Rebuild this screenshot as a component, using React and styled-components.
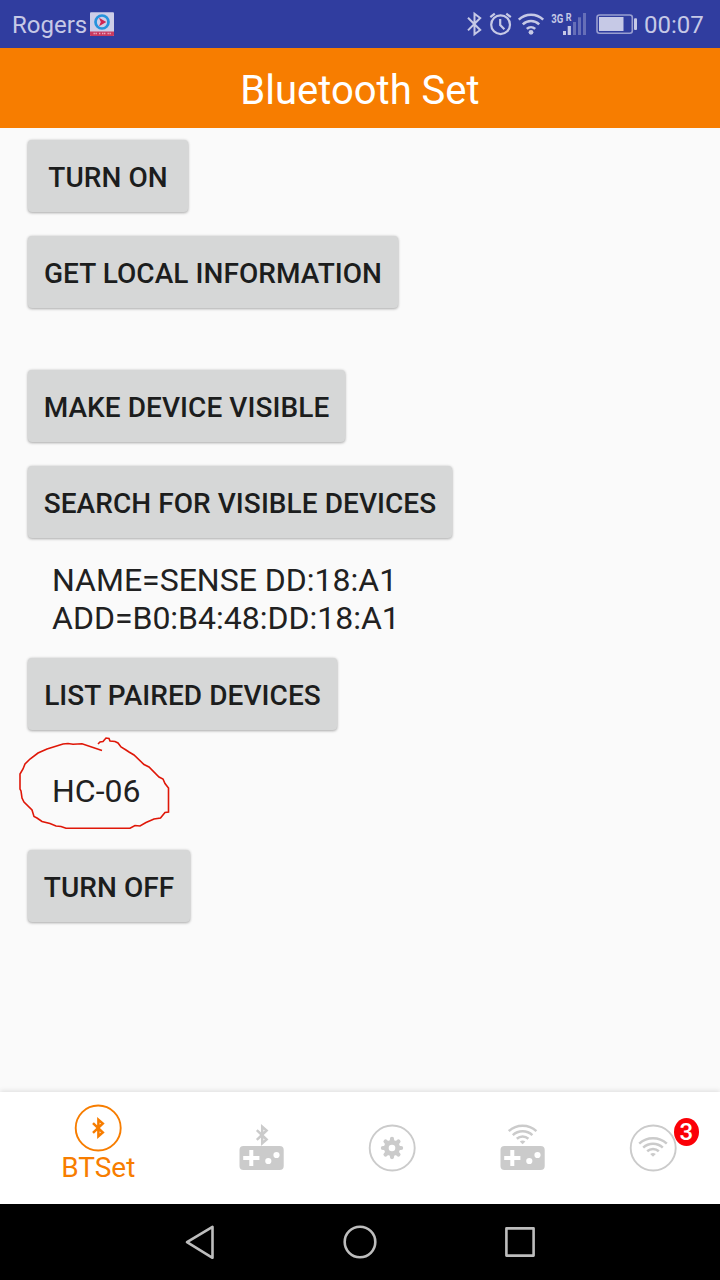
import React from "react";
import styled, { createGlobalStyle } from "styled-components";

const GlobalStyle = createGlobalStyle`
  * { box-sizing: border-box; }
  body { margin: 0; background: #fafafa; font-family: Roboto, sans-serif; }
`;

const Screen = styled.div`
  width: 720px;
  height: 1280px;
  display: flex;
  flex-direction: column;
  background: #fafafa;
  overflow: hidden;
`;

const StatusBar = styled.header`
  height: 48px;
  flex: none;
  display: flex;
  align-items: center;
  padding: 0 16px 0 12px;
  background: #303d9f;
  color: #c6c9e6;
  font-size: 24px;
  line-height: 48px;
`;

const Carrier = styled.span`
  width: 78px;
  padding-top: 2px;
`;

const StatusIcons = styled.div`
  margin-left: auto;
  display: flex;
  height: 48px;
`;

const Clock = styled.span`
  width: 60px;
  margin-left: 4px;
  padding-top: 1px;
  white-space: nowrap;
`;

const TitleBar = styled.div`
  height: 80px;
  flex: none;
  display: flex;
  align-items: center;
  justify-content: center;
  padding-top: 4px;
  background: #f77d00;
  color: #fff;
  font-size: 40px;
`;

const Content = styled.main`
  flex: 1;
  display: flex;
  flex-direction: column;
  align-items: flex-start;
  padding: 12px 28px 0;
`;

const ActionButton = styled.button`
  width: ${(p) => p.$width}px;
  height: 72px;
  flex: none;
  margin: 0 0 24px;
  padding: 2px 0 0;
  border: 0;
  border-radius: 4px;
  background: #d6d7d7;
  box-shadow: 0 1px 3px rgba(0, 0, 0, 0.28), 0 0 3px rgba(0, 0, 0, 0.12);
  color: #1c1d1d;
  font: 500 28px/33px Roboto, sans-serif;
  letter-spacing: 0.06px;
  white-space: nowrap;
`;

const Result = styled.div`
  position: relative;
  height: ${(p) => p.$height}px;
  flex: none;
  padding: ${(p) => p.$top || 0}px 0 0 24px;
  color: #212121;
  font-size: 32px;
  line-height: 38px;
  white-space: pre;
`;

const ResultText = styled.div`
  margin-top: -1px;
`;

const Scribble = styled.svg`
  position: absolute;
  left: -10px;
  top: -20px;
`;

const TabBar = styled.nav`
  height: 112px;
  flex: none;
  display: grid;
  grid-template-columns: 196.5px repeat(4, 130.5px);
  background: #fff;
  box-shadow: 0 -1px 5px rgba(0, 0, 0, 0.12);
`;

const Tab = styled.div`
  display: flex;
  flex-direction: column;
  align-items: center;
  padding-top: ${(p) => (p.$active ? 12 : 32)}px;
  color: ${(p) => (p.$active ? "#f77d00" : "#cbcbcb")};
  font-size: 28px;
  line-height: 32px;
`;

const IconHolder = styled.div`
  position: relative;
  width: 48px;
  height: 48px;
`;

const Badge = styled.span`
  position: absolute;
  left: 44.5px;
  top: -6px;
  width: 25px;
  height: 28px;
  border-radius: 12.5px / 14px;
  background: #fb0007;
  color: #fff;
  font-size: 24px;
  font-weight: 500;
  line-height: 29px;
  text-align: center;
`;

const NavBar = styled.footer`
  height: 76px;
  flex: none;
  display: flex;
  justify-content: center;
  align-items: center;
  gap: 120px;
  background: #000;
`;

const Icon = styled.svg`
  display: block;
  flex: none;
`;

const AppIcon = () => (
  <Icon width="24" height="48" viewBox="0 0 24 48">
    <rect y="12.3" width="24" height="23.7" rx="1" fill="#cdcee8" />
    <path d="M0 31.6h24V35a1 1 0 0 1-1 1H1a1 1 0 0 1-1-1z" fill="#c83a60" />
    <circle cx="12" cy="22" r="6.5" fill="none" stroke="#2593dc" strokeWidth="2.7" />
    <path d="M9 17.8l7.3 4.2L9 26.200l1.800-4.200z" fill="#cf2553" />
    <path d="M3.5 33.5h4M9 33.500h2M12 33.500h4M17.500 33.500h3.500" stroke="#e7a9c0" strokeWidth="1.7" strokeDasharray="1.4 .6" />
  </Icon>
);

const StatusGlyphs = () => (
  <Icon width="180" height="48" viewBox="460 0 180 48" fill="none" stroke="#c6c9e6">
    <path d="M468 17.800L480.200 30 474.500 34.200V13.800L480.200 18 468 30.400" strokeWidth="2" />
    <circle cx="500.6" cy="24.7" r="9.4" strokeWidth="2.2" />
    <path d="M500.200 19v6l4.200 4.200" strokeWidth="2.2" />
    <path d="M490.300 17.200l4.500-3.600M510.800 17.200l-4.500-3.600" strokeWidth="2.2" />
    <path d="M518.800 19.700a17.600 17.600 0 0 1 24.400 0M522.800 24.400a11.800 11.800 0 0 1 16.400 0M526.800 28.800a6.200 6.200 0 0 1 8.400 0" strokeWidth="2.5" />
    <circle cx="531" cy="32.3" r="2.4" fill="#c6c9e6" stroke="none" />
    <g fill="#c6c9e6" stroke="none" fontFamily="Roboto, sans-serif" fontWeight="700">
      <text x="551.3" y="23" fontSize="13.5" textLength="12" lengthAdjust="spacingAndGlyphs">3G</text>
      <text x="565.8" y="20.8" fontSize="10.5" textLength="5.8" lengthAdjust="spacingAndGlyphs">R</text>
      <rect x="563" y="31" width="3" height="4" />
      <rect x="567.7" y="26" width="3.2" height="9" />
      <g opacity=".36">
        <rect x="573" y="22" width="3" height="13" />
        <rect x="578" y="17.3" width="3" height="17.7" />
        <rect x="583" y="13" width="3" height="22" />
      </g>
      <rect x="599" y="17" width="24.5" height="14" />
      <rect x="634" y="18.3" width="3" height="11.7" rx="1" />
    </g>
    <rect x="597" y="15" width="35.3" height="18.2" rx="2.5" strokeWidth="1.6" opacity=".7" />
  </Icon>
);

const MiniBluetooth = ({ x, y }) => (
  <path
    transform={`translate(${x} ${y})`}
    d="M-5.200 -4.800L4.600 4.500 .2 8.300V-8.300L4.600 -4.500 -5.200 4.800"
    fill="none"
    stroke="currentColor"
    strokeWidth="2.5"
  />
);

const Ring = () => <circle cx="24.2" cy="24" r="22.5" fill="none" stroke="currentColor" strokeWidth="1.9" />;

const TabIcon = ({ children }) => (
  <Icon width="48" height="48" viewBox="0 0 48 48">{children}</Icon>
);

const Gamepad = () => (
  <>
    <rect x="1.5" y="22" width="44.2" height="24" rx="4" fill="currentColor" />
    <path d="M5.200 34h16.200M13.300 26v16" stroke="#fff" strokeWidth="4" />
    <circle cx="30.3" cy="37" r="3.1" fill="#fff" />
    <circle cx="38.5" cy="31" r="3.1" fill="#fff" />
  </>
);

const Gear = () => (
  <>
    <g stroke="currentColor" strokeWidth="4.2" strokeLinecap="round">
      {[0, 45, 90, 135].map((a) => (
        <path key={a} d="M24 14.900v18.200" transform={`rotate(${a} 24 24)`} />
      ))}
    </g>
    <circle cx="24" cy="24" r="8.1" fill="currentColor" />
    <circle cx="24" cy="24" r="3.3" fill="#fff" />
  </>
);

const Waves = ({ x, y }) => (
  <g transform={`translate(${x} ${y})`} fill="none" stroke="currentColor" strokeWidth="2.5">
    <path d="M-13.800 7.200a20.500 20.500 0 0 1 27.600 0M-9.800 11.100a14.400 14.400 0 0 1 19.600 0M-5.800 14.800a8.700 8.700 0 0 1 11.600 0" />
    <path d="M-2.800 17.500Q0 15.700 2.800 17.500L0 20.300z" fill="currentColor" stroke="none" />
  </g>
);

export default function App() {
  return (
    <>
      <GlobalStyle />
      <Screen>
        <StatusBar>
          <Carrier>Rogers</Carrier>
          <AppIcon />
          <StatusIcons>
            <StatusGlyphs />
            <Clock>00:07</Clock>
          </StatusIcons>
        </StatusBar>
        <TitleBar>Bluetooth Set</TitleBar>
        <Content>
          <ActionButton $width={160}>TURN ON</ActionButton>
          <ActionButton $width={370}>GET LOCAL INFORMATION</ActionButton>
          <Result $height={38} />
          <ActionButton $width={317}>MAKE DEVICE VISIBLE</ActionButton>
          <ActionButton $width={424}>SEARCH FOR VISIBLE DEVICES</ActionButton>
          <Result $height={96}>
            <ResultText>{"NAME=SENSE DD:18:A1\nADD=B0:B4:48:DD:18:A1"}</ResultText>
          </Result>
          <ActionButton $width={309}>LIST PAIRED DEVICES</ActionButton>
          <Result $height={96} $top={19}>
            <ResultText>HC-06</ResultText>
            <Scribble width="156" height="100" viewBox="18 734 156 100" fill="none" stroke="#df1708" strokeWidth="1.6">
              <polyline points="98,744 100,742 103,741.5 106,738 109,738.5 110,741 115,741.5 118,743 121,747 126,750 129,752 134,755 144,764.5 149,767 159,777 163,779 165,783.5 168.500,788 168.500,812 165,812.500 160.500,818 154,819 146,822.500 140,826 135,825.500 130,828.300 66,828.300 61,826.500 56,826 50,823.500 42,821.500 37,818 34,816.500 32,810 24,802 22,798 21,791 20,789 20,774 23,769 25,764 30,759 38,753 47,749 63,744 68,743.500 73,744.300 82,743.700 102,750.500" />
            </Scribble>
          </Result>
          <ActionButton $width={162}>TURN OFF</ActionButton>
        </Content>
        <TabBar>
          <Tab $active>
            <TabIcon><Ring /><MiniBluetooth x={24.2} y={24} /></TabIcon>
            BTSet
          </Tab>
          <Tab>
            <TabIcon><MiniBluetooth x={24} y={11} /><Gamepad /></TabIcon>
          </Tab>
          <Tab>
            <TabIcon><Ring /><Gear /></TabIcon>
          </Tab>
          <Tab>
            <TabIcon><Waves x={23.600} y={0} /><Gamepad /></TabIcon>
          </Tab>
          <Tab>
            <IconHolder>
              <TabIcon><Ring /><Waves x={24} y={12.500} /></TabIcon>
              <Badge>3</Badge>
            </IconHolder>
          </Tab>
        </TabBar>
        <NavBar>
          <Icon width="40" height="40" viewBox="0 0 40 40" fill="none" stroke="#bdbdbd" strokeWidth="2.6" strokeLinejoin="round">
            <path d="M32.500 4.800v31L7 20.200z" />
          </Icon>
          <Icon width="40" height="40" viewBox="0 0 40 40" fill="none" stroke="#bdbdbd" strokeWidth="2.6">
            <circle cx="20" cy="20" r="15.3" />
          </Icon>
          <Icon width="40" height="40" viewBox="0 0 40 40" fill="none" stroke="#bdbdbd" strokeWidth="2.6" strokeLinejoin="round">
            <rect x="6.4" y="6.4" width="27.2" height="27.2" />
          </Icon>
        </NavBar>
      </Screen>
    </>
  );
}
